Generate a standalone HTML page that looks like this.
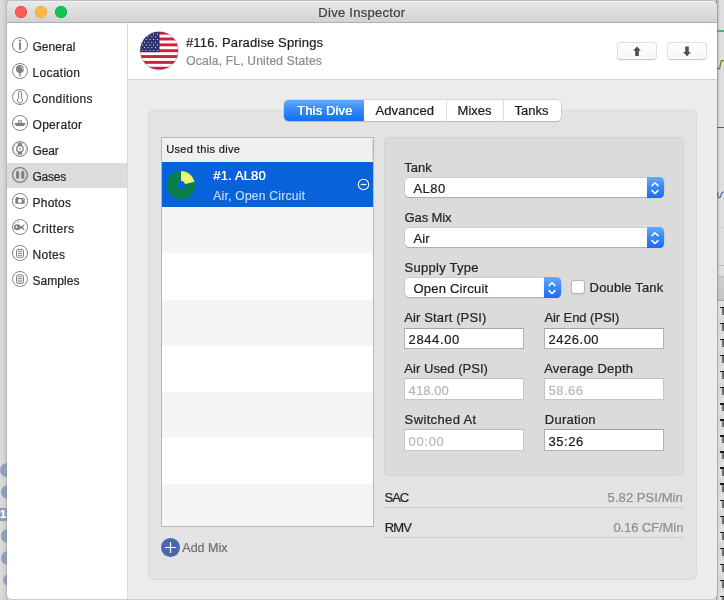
<!DOCTYPE html>
<html><head><meta charset="utf-8"><title>Dive Inspector</title>
<style>
html,body{margin:0;padding:0;}
body{width:724px;height:600px;overflow:hidden;position:relative;background:#d9d9d9;font-family:"Liberation Sans",sans-serif;}
.a{position:absolute;}
.t{position:absolute;white-space:nowrap;line-height:1;-webkit-text-stroke:0.22px currentColor;font-family:"Liberation Sans",sans-serif;}
svg{position:absolute;overflow:visible;}
</style></head><body>
<div class="a" style="left:0;top:0;width:724px;height:600px;will-change:transform;">

<div class="a" style="left:0;top:0;width:8px;height:600px;background:linear-gradient(90deg,#dcdcdc 0,#d3d3d3 4px,#c3c3c3 7px);"></div>
<div class="a" style="left:0px;top:463px;width:14px;height:14px;border-radius:7px;background:#8e9fbc;"></div>
<div class="a" style="left:1px;top:485px;width:14px;height:14px;border-radius:7px;background:#8e9fbc;"></div>
<div class="a" style="left:0.5px;top:529px;width:14px;height:14px;border-radius:7px;background:#8e9fbc;"></div>
<div class="a" style="left:0.5px;top:550.5px;width:14px;height:14px;border-radius:7px;background:#8e9fbc;"></div>
<div class="a" style="left:2.5px;top:573.5px;width:12px;height:12px;border-radius:6px;background:#8e9fbc;"></div>
<div class="a" style="left:0;top:508px;width:8px;height:13px;background:#8d9dba;"></div>
<div class="t" style="left:0px;top:508.5px;font-size:11px;font-weight:bold;color:#fff;">1:</div>
<div class="a" style="left:716px;top:0;width:8px;height:600px;background:#dedede;"></div>
<div class="a" style="left:716px;top:0;width:4px;height:600px;background:linear-gradient(90deg,#bdbdbd,#dedede);"></div>
<div class="a" style="left:716px;top:30px;width:8px;height:1.5px;background:#4fae78;"></div>
<div class="a" style="left:716px;top:126.5px;width:8px;height:1.5px;background:#8a3a96;"></div>
<svg style="left:716px;top:55px" width="8" height="20"><path d="M0 13.6 L3.6 13.6 L5.2 5.6 L8 5.6" fill="none" stroke="#6f7a22" stroke-width="1.2"/></svg>
<svg style="left:716px;top:188px" width="8" height="14"><path d="M1.5 4 C1.5 11 4.5 11 5 7 C5.3 4.5 6.5 4 8 4" fill="none" stroke="#4a5fa8" stroke-width="1.2"/></svg>
<div class="a" style="left:716px;top:227px;width:8px;height:1px;background:#cfcfcf;"></div>
<div class="a" style="left:716px;top:265px;width:8px;height:1px;background:#bdbdbd;"></div>
<div class="a" style="left:716px;top:276px;width:8px;height:25px;background:linear-gradient(#b4b4b4 0,#cdcdcd 2px,#c4c4c4 100%);border-bottom:1px solid #a8a8a8;box-sizing:border-box;"></div>
<div class="a" style="left:716px;top:301.40px;width:8px;height:16.07px;background:#e0e0e0;"></div>
<div class="a" style="left:722px;top:306.80px;width:2px;height:8px;background:#6a6a6a;"></div>
<div class="a" style="left:719.8px;top:306.70px;width:5px;height:1.4px;background:#1c1c1c;"></div>
<div class="a" style="left:716px;top:317.47px;width:8px;height:16.07px;background:#d9d9d9;"></div>
<div class="a" style="left:722px;top:322.87px;width:2px;height:8px;background:#6a6a6a;"></div>
<div class="a" style="left:719.8px;top:322.77px;width:5px;height:1.4px;background:#1c1c1c;"></div>
<div class="a" style="left:716px;top:333.54px;width:8px;height:16.07px;background:#e0e0e0;"></div>
<div class="a" style="left:722px;top:338.94px;width:2px;height:8px;background:#6a6a6a;"></div>
<div class="a" style="left:719.8px;top:338.84px;width:5px;height:1.4px;background:#1c1c1c;"></div>
<div class="a" style="left:716px;top:349.61px;width:8px;height:16.07px;background:#d9d9d9;"></div>
<div class="a" style="left:722px;top:355.01px;width:2px;height:8px;background:#6a6a6a;"></div>
<div class="a" style="left:719.8px;top:354.91px;width:5px;height:1.4px;background:#1c1c1c;"></div>
<div class="a" style="left:716px;top:365.68px;width:8px;height:16.07px;background:#e0e0e0;"></div>
<div class="a" style="left:722px;top:371.08px;width:2px;height:8px;background:#6a6a6a;"></div>
<div class="a" style="left:719.8px;top:370.98px;width:5px;height:1.4px;background:#1c1c1c;"></div>
<div class="a" style="left:716px;top:381.75px;width:8px;height:16.07px;background:#d9d9d9;"></div>
<div class="a" style="left:722px;top:387.15px;width:2px;height:8px;background:#6a6a6a;"></div>
<div class="a" style="left:719.8px;top:387.05px;width:5px;height:1.4px;background:#1c1c1c;"></div>
<div class="a" style="left:716px;top:397.82px;width:8px;height:16.07px;background:#e0e0e0;"></div>
<div class="a" style="left:722px;top:403.22px;width:2px;height:8px;background:#6a6a6a;"></div>
<div class="a" style="left:719.8px;top:403.12px;width:5px;height:1.4px;background:#1c1c1c;"></div>
<div class="a" style="left:716px;top:413.89px;width:8px;height:16.07px;background:#d9d9d9;"></div>
<div class="a" style="left:722px;top:419.29px;width:2px;height:8px;background:#6a6a6a;"></div>
<div class="a" style="left:719.8px;top:419.19px;width:5px;height:1.4px;background:#1c1c1c;"></div>
<div class="a" style="left:716px;top:429.96px;width:8px;height:16.07px;background:#e0e0e0;"></div>
<div class="a" style="left:722px;top:435.36px;width:2px;height:8px;background:#6a6a6a;"></div>
<div class="a" style="left:719.8px;top:435.26px;width:5px;height:1.4px;background:#1c1c1c;"></div>
<div class="a" style="left:716px;top:446.03px;width:8px;height:16.07px;background:#d9d9d9;"></div>
<div class="a" style="left:722px;top:451.43px;width:2px;height:8px;background:#6a6a6a;"></div>
<div class="a" style="left:719.8px;top:451.33px;width:5px;height:1.4px;background:#1c1c1c;"></div>
<div class="a" style="left:716px;top:462.10px;width:8px;height:16.07px;background:#e0e0e0;"></div>
<div class="a" style="left:722px;top:467.50px;width:2px;height:8px;background:#6a6a6a;"></div>
<div class="a" style="left:719.8px;top:467.40px;width:5px;height:1.4px;background:#1c1c1c;"></div>
<div class="a" style="left:716px;top:478.17px;width:8px;height:16.07px;background:#d9d9d9;"></div>
<div class="a" style="left:722px;top:483.57px;width:2px;height:8px;background:#6a6a6a;"></div>
<div class="a" style="left:719.8px;top:483.47px;width:5px;height:1.4px;background:#1c1c1c;"></div>
<div class="a" style="left:716px;top:494.24px;width:8px;height:16.07px;background:#e0e0e0;"></div>
<div class="a" style="left:722px;top:499.64px;width:2px;height:8px;background:#6a6a6a;"></div>
<div class="a" style="left:719.8px;top:499.54px;width:5px;height:1.4px;background:#1c1c1c;"></div>
<div class="a" style="left:716px;top:510.31px;width:8px;height:16.07px;background:#d9d9d9;"></div>
<div class="a" style="left:722px;top:515.71px;width:2px;height:8px;background:#6a6a6a;"></div>
<div class="a" style="left:719.8px;top:515.61px;width:5px;height:1.4px;background:#1c1c1c;"></div>
<div class="a" style="left:716px;top:526.38px;width:8px;height:16.07px;background:#e0e0e0;"></div>
<div class="a" style="left:722px;top:531.78px;width:2px;height:8px;background:#6a6a6a;"></div>
<div class="a" style="left:719.8px;top:531.68px;width:5px;height:1.4px;background:#1c1c1c;"></div>
<div class="a" style="left:716px;top:542.45px;width:8px;height:16.07px;background:#d9d9d9;"></div>
<div class="a" style="left:722px;top:547.85px;width:2px;height:8px;background:#6a6a6a;"></div>
<div class="a" style="left:719.8px;top:547.75px;width:5px;height:1.4px;background:#1c1c1c;"></div>
<div class="a" style="left:716px;top:558.52px;width:8px;height:16.07px;background:#e0e0e0;"></div>
<div class="a" style="left:722px;top:563.92px;width:2px;height:8px;background:#6a6a6a;"></div>
<div class="a" style="left:719.8px;top:563.82px;width:5px;height:1.4px;background:#1c1c1c;"></div>
<div class="a" style="left:716px;top:574.59px;width:8px;height:16.07px;background:#d9d9d9;"></div>
<div class="a" style="left:722px;top:579.99px;width:2px;height:8px;background:#6a6a6a;"></div>
<div class="a" style="left:719.8px;top:579.89px;width:5px;height:1.4px;background:#1c1c1c;"></div>
<div class="a" style="left:716px;top:590.66px;width:8px;height:16.07px;background:#e0e0e0;"></div>
<div class="a" style="left:722px;top:596.06px;width:2px;height:8px;background:#6a6a6a;"></div>
<div class="a" style="left:719.8px;top:595.96px;width:5px;height:1.4px;background:#1c1c1c;"></div>
<div class="a" style="left:716px;top:0;width:3.2px;height:600px;background:linear-gradient(90deg,rgba(110,110,110,.6),rgba(140,140,140,0));"></div>
<div class="a" style="left:8px;top:0;width:708px;height:1.2px;background:#c6c9d0;"></div>
<div class="a" id="win" style="left:7px;top:1px;width:710px;height:598.4px;border-radius:5px 5px 5px 5px;background:#ececec;overflow:hidden;box-shadow:0 0 0 0.5px rgba(0,0,0,.12);">
<div class="a" style="left:-7px;top:-1px;width:724px;height:600px;">
<div class="a" style="left:7px;top:1px;width:710px;height:21px;background:linear-gradient(#e9e9e9,#d2d2d2);border-bottom:1px solid #b0b0b0;box-shadow:inset 0 1px 0 #f2f2f2;"></div>
<div class="a" style="left:15px;top:5.9px;width:12px;height:12px;border-radius:6px;background:#fc5b57;box-shadow:inset 0 0 0 0.5px #df4744;"></div>
<div class="a" style="left:35px;top:5.9px;width:12px;height:12px;border-radius:6px;background:#fdbc40;box-shadow:inset 0 0 0 0.5px #de9f34;"></div>
<div class="a" style="left:55px;top:5.9px;width:12px;height:12px;border-radius:6px;background:#14c552;box-shadow:inset 0 0 0 0.5px #10a844;"></div>
<div class="t" style="left:318.30px;top:6px;font-size:13px;color:#404040;letter-spacing:0.285px;">Dive Inspector</div>
<div class="a" style="left:7px;top:23px;width:120px;height:580px;background:#fff;border-right:1px solid #dadada;"></div>
<div class="a" style="left:7px;top:163px;width:120px;height:24.7px;background:#dcdcdc;"></div>
<div class="a" style="left:128px;top:23px;width:590px;height:56px;background:#fff;border-bottom:1px solid #d2d2d2;"></div>
<div class="t" style="left:32.50px;top:41px;font-size:12px;color:#262626;letter-spacing:0.034px;">General</div>
<div class="a" style="left:11.95px;top:36.90px;width:15.8px;height:15.8px;border-radius:50%;box-sizing:border-box;border:1.3px solid #828282;"></div>
<div class="t" style="left:32.50px;top:67px;font-size:12px;color:#262626;letter-spacing:0.304px;">Location</div>
<div class="a" style="left:11.95px;top:62.90px;width:15.8px;height:15.8px;border-radius:50%;box-sizing:border-box;border:1.3px solid #828282;"></div>
<div class="t" style="left:32.50px;top:93px;font-size:12px;color:#262626;letter-spacing:0.367px;">Conditions</div>
<div class="a" style="left:11.95px;top:88.90px;width:15.8px;height:15.8px;border-radius:50%;box-sizing:border-box;border:1.3px solid #828282;"></div>
<div class="t" style="left:32.50px;top:119px;font-size:12px;color:#262626;letter-spacing:0.307px;">Operator</div>
<div class="a" style="left:11.95px;top:114.90px;width:15.8px;height:15.8px;border-radius:50%;box-sizing:border-box;border:1.3px solid #828282;"></div>
<div class="t" style="left:32.50px;top:145px;font-size:12px;color:#262626;letter-spacing:-0.159px;">Gear</div>
<div class="a" style="left:11.95px;top:140.90px;width:15.8px;height:15.8px;border-radius:50%;box-sizing:border-box;border:1.3px solid #828282;"></div>
<div class="t" style="left:32.50px;top:171px;font-size:12px;color:#262626;letter-spacing:-0.220px;">Gases</div>
<div class="a" style="left:11.95px;top:166.90px;width:15.8px;height:15.8px;border-radius:50%;box-sizing:border-box;border:1.3px solid #828282;"></div>
<div class="t" style="left:32.50px;top:197px;font-size:12px;color:#262626;letter-spacing:0.229px;">Photos</div>
<div class="a" style="left:11.95px;top:192.90px;width:15.8px;height:15.8px;border-radius:50%;box-sizing:border-box;border:1.3px solid #828282;"></div>
<div class="t" style="left:32.50px;top:223px;font-size:12px;color:#262626;letter-spacing:0.405px;">Critters</div>
<div class="a" style="left:11.95px;top:218.90px;width:15.8px;height:15.8px;border-radius:50%;box-sizing:border-box;border:1.3px solid #828282;"></div>
<div class="t" style="left:32.50px;top:249px;font-size:12px;color:#262626;letter-spacing:0.289px;">Notes</div>
<div class="a" style="left:11.95px;top:244.90px;width:15.8px;height:15.8px;border-radius:50%;box-sizing:border-box;border:1.3px solid #828282;"></div>
<div class="t" style="left:32.50px;top:275px;font-size:12px;color:#262626;letter-spacing:0.051px;">Samples</div>
<div class="a" style="left:11.95px;top:270.90px;width:15.8px;height:15.8px;border-radius:50%;box-sizing:border-box;border:1.3px solid #828282;"></div>
<svg style="left:0;top:0" width="40" height="300" viewBox="0 0 40 300">
<g fill="#808080" stroke="none">
<!-- General: i -->
<circle cx="19.95" cy="40.6" r="1.15"/>
<rect x="18.95" y="42.5" width="2.0" height="7.2" rx="0.3"/>
<!-- Location: pin -->
<circle cx="19.9" cy="69.0" r="3.9"/>
<path d="M19.0 72 L20.8 72 L20.4 76.8 L19.4 76.8 Z"/>
<path d="M20.6 66.4 A2.5 2.5 0 0 1 22.6 69.2" fill="none" stroke="#fff" stroke-width="0.8"/>
<!-- Conditions: thermometer -->
<path d="M18.5 92.6 A1.4 1.4 0 0 1 21.3 92.6 L21.3 98.2 A2.6 2.6 0 1 1 18.5 98.2 Z" fill="none" stroke="#808080" stroke-width="1"/>
<path d="M21.3 94.4 H22.6 M21.3 96.3 H22.6" stroke="#808080" stroke-width="0.8"/>
<!-- Operator: boat -->
<path d="M14.2 122.9 L25.8 122.9 L23.8 126 L16.2 126 Z"/>
<path d="M18.2 120.2 H21.9 V122.9 H18.2 Z M19.2 121 V122.4 H20.9 V121 Z" fill-rule="evenodd"/>
<!-- Gear: watch -->
<path d="M18.0 143.1 H21.8 L22.3 146.2 H17.5 Z M18.0 154.6 H21.8 L22.3 151.5 H17.5 Z"/>
<circle cx="19.9" cy="148.85" r="3.25" fill="#fff" stroke="#808080" stroke-width="1.3"/>
<circle cx="19.9" cy="148.85" r="0.9"/>
<circle cx="19.85" cy="148.8" r="6.4" fill="none" stroke="#9a9a9a" stroke-width="0.6"/>
<circle cx="19.85" cy="174.8" r="7.25" fill="none" stroke="#7a7a7a" stroke-width="1.3" stroke-opacity="0.6"/>
<!-- Gases: tanks -->
<path d="M16 172.6 Q16 171.4 17 171.2 L17 170.4 H18.1 L18.1 171.2 Q19.1 171.4 19.1 172.6 L19.1 177.8 Q19.1 178.8 17.55 178.8 Q16 178.8 16 177.8 Z"/>
<path d="M21.2 172.6 Q21.2 171.4 22.2 171.2 L22.2 170.4 H23.3 L23.3 171.2 Q24.3 171.4 24.3 172.6 L24.3 177.8 Q24.3 178.8 22.75 178.8 Q21.2 178.8 21.2 177.8 Z"/>
<!-- Photos: camera -->
<path d="M15.3 198.7 Q15.3 198.0 16 198.0 L16.2 197.1 H18.6 L18.8 198.0 H24 Q24.7 198.0 24.7 198.7 V203.0 Q24.7 203.7 24 203.7 H16 Q15.3 203.7 15.3 203.0 Z"/>
<circle cx="19.9" cy="200.9" r="2.0" fill="#fff"/>
<circle cx="23.4" cy="199.3" r="0.55" fill="#fff"/>
<!-- Critters: fish -->
<ellipse cx="17.3" cy="227.3" rx="3.5" ry="3.0"/>
<path d="M19.6 227.3 L24.8 224.0 L23.0 227.3 L24.8 230.6 Z"/>
<circle cx="16.5" cy="227.0" r="0.95" fill="#fff"/>
<circle cx="18" cy="221.7" r="0.8" fill="#9a9a9a"/>
<circle cx="15.6" cy="223.4" r="0.45" fill="#8a8a8a"/>
<!-- Notes -->
<rect x="16.5" y="249.7" width="7.0" height="7.6" rx="1.0" fill="none" stroke="#808080" stroke-width="1.0"/>
<path d="M18.4 248.4 V250 M21.5 248.4 V250" stroke="#808080" stroke-width="0.9"/>
<path d="M18 251.6 H22 M18 253.5 H22 M18 255.4 H22" stroke="#808080" stroke-width="0.9"/>
<!-- Samples -->
<rect x="16.5" y="274.8" width="7.0" height="8.8" rx="1.8" fill="none" stroke="#808080" stroke-width="1.0"/>
<path d="M17.6 276.7 H22.4 M17.6 278.45 H22.4 M17.6 280.2 H22.4 M17.6 281.9 H22.4" stroke="#808080" stroke-width="0.85"/>
</g></svg>

<svg style="left:0;top:0" width="200" height="80" viewBox="0 0 200 80"><defs><clipPath id="fc"><circle cx="159.2" cy="50.7" r="19.0"/></clipPath></defs><g clip-path="url(#fc)">
<rect x="140.2" y="31.700000000000003" width="38.0" height="38.0" fill="#ffffff"/>
<rect x="140.2" y="31.70" width="38.0" height="2.92" fill="#cf2238"/>
<rect x="140.2" y="37.55" width="38.0" height="2.92" fill="#cf2238"/>
<rect x="140.2" y="43.39" width="38.0" height="2.92" fill="#cf2238"/>
<rect x="140.2" y="49.24" width="38.0" height="2.92" fill="#cf2238"/>
<rect x="140.2" y="55.08" width="38.0" height="2.92" fill="#cf2238"/>
<rect x="140.2" y="60.93" width="38.0" height="2.92" fill="#cf2238"/>
<rect x="140.2" y="66.78" width="38.0" height="2.92" fill="#cf2238"/>
<rect x="140.2" y="31.700000000000003" width="19.3" height="20.46" fill="#2d3270"/>
<circle cx="142.60" cy="34.12" r="0.55" fill="#fff"/>
<circle cx="146.30" cy="34.12" r="0.55" fill="#fff"/>
<circle cx="150.00" cy="34.12" r="0.55" fill="#fff"/>
<circle cx="153.70" cy="34.12" r="0.55" fill="#fff"/>
<circle cx="157.40" cy="34.12" r="0.55" fill="#fff"/>
<circle cx="144.45" cy="36.82" r="0.55" fill="#fff"/>
<circle cx="148.15" cy="36.82" r="0.55" fill="#fff"/>
<circle cx="151.85" cy="36.82" r="0.55" fill="#fff"/>
<circle cx="155.55" cy="36.82" r="0.55" fill="#fff"/>
<circle cx="142.60" cy="39.51" r="0.55" fill="#fff"/>
<circle cx="146.30" cy="39.51" r="0.55" fill="#fff"/>
<circle cx="150.00" cy="39.51" r="0.55" fill="#fff"/>
<circle cx="153.70" cy="39.51" r="0.55" fill="#fff"/>
<circle cx="157.40" cy="39.51" r="0.55" fill="#fff"/>
<circle cx="144.45" cy="42.20" r="0.55" fill="#fff"/>
<circle cx="148.15" cy="42.20" r="0.55" fill="#fff"/>
<circle cx="151.85" cy="42.20" r="0.55" fill="#fff"/>
<circle cx="155.55" cy="42.20" r="0.55" fill="#fff"/>
<circle cx="142.60" cy="44.89" r="0.55" fill="#fff"/>
<circle cx="146.30" cy="44.89" r="0.55" fill="#fff"/>
<circle cx="150.00" cy="44.89" r="0.55" fill="#fff"/>
<circle cx="153.70" cy="44.89" r="0.55" fill="#fff"/>
<circle cx="157.40" cy="44.89" r="0.55" fill="#fff"/>
<circle cx="144.45" cy="47.58" r="0.55" fill="#fff"/>
<circle cx="148.15" cy="47.58" r="0.55" fill="#fff"/>
<circle cx="151.85" cy="47.58" r="0.55" fill="#fff"/>
<circle cx="155.55" cy="47.58" r="0.55" fill="#fff"/>
<circle cx="142.60" cy="50.28" r="0.55" fill="#fff"/>
<circle cx="146.30" cy="50.28" r="0.55" fill="#fff"/>
<circle cx="150.00" cy="50.28" r="0.55" fill="#fff"/>
<circle cx="153.70" cy="50.28" r="0.55" fill="#fff"/>
<circle cx="157.40" cy="50.28" r="0.55" fill="#fff"/>
</g>
<circle cx="159.2" cy="50.7" r="19.0" fill="none" stroke="#5b2a35" stroke-opacity=".55" stroke-width="0.6"/></svg>
<div class="t" style="left:186.00px;top:36px;font-size:13px;color:#1e1e1e;letter-spacing:0.135px;">#116. Paradise Springs</div>
<div class="t" style="left:186.30px;top:55px;font-size:12px;color:#8c8c8c;letter-spacing:0.207px;">Ocala, FL, United States</div>
<div class="a" style="left:617.3px;top:42px;width:39.4px;height:17.5px;box-sizing:border-box;border-radius:4px;background:linear-gradient(#ffffff,#f7f7f7);border:1px solid #dfdfdf;border-bottom-color:#cbcbcb;box-shadow:0 0.5px 0.5px rgba(0,0,0,.08);"></div>
<svg style="left:631.8px;top:46px" width="10" height="11"><path d="M5 0.5 L8.9 4.8 L6.8 4.8 L6.8 10 L3.2 10 L3.2 4.8 L1.1 4.8 Z" fill="#505050"/></svg>
<div class="a" style="left:667.4px;top:42px;width:39.4px;height:17.5px;box-sizing:border-box;border-radius:4px;background:linear-gradient(#ffffff,#f7f7f7);border:1px solid #dfdfdf;border-bottom-color:#cbcbcb;box-shadow:0 0.5px 0.5px rgba(0,0,0,.08);"></div>
<svg style="left:681.9px;top:46px" width="10" height="11"><path d="M5 10.2 L8.9 5.9 L6.8 5.9 L6.8 0.6 L3.2 0.6 L3.2 5.9 L1.1 5.9 Z" fill="#505050"/></svg>
<div class="a" style="left:148.3px;top:110px;width:548.6px;height:469.5px;box-sizing:border-box;border-radius:5px;background:#e3e3e3;border:1px solid #dadada;"></div>
<div class="a" style="left:284px;top:100px;width:277px;height:20.5px;box-sizing:border-box;border-radius:4.5px;background:#fff;box-shadow:0 0 0 0.5px #c4c4c4,0 1px 1px rgba(0,0,0,.22);overflow:hidden;"><div class="a" style="left:0;top:0;width:80px;height:21px;background:linear-gradient(#62a9f9,#3487f6 50%,#126ff5);"></div><div class="a" style="left:162px;top:0;width:1px;height:21px;background:#dcdcdc;"></div><div class="a" style="left:219px;top:0;width:1px;height:21px;background:#dcdcdc;"></div></div>
<div class="t" style="left:297.20px;top:104px;font-size:13px;color:#ffffff;letter-spacing:0.127px;text-shadow:0 0 0.4px #fff;">This Dive</div>
<div class="t" style="left:375.50px;top:104px;font-size:13px;color:#1c1c1c;letter-spacing:0.097px;">Advanced</div>
<div class="t" style="left:457.60px;top:104px;font-size:13px;color:#1c1c1c;letter-spacing:-0.011px;">Mixes</div>
<div class="t" style="left:514.60px;top:104px;font-size:13px;color:#1c1c1c;letter-spacing:-0.039px;">Tanks</div>
<div class="a" style="left:161px;top:137px;width:213px;height:390px;box-sizing:border-box;background:#fff;border:1px solid #b9b9b9;"></div>
<div class="a" style="left:162px;top:138px;width:211px;height:23.5px;background:#f0f0f0;border-bottom:0.5px solid #d0d0d0;"></div>
<div class="a" style="left:371.5px;top:140px;width:1px;height:19px;background:#d4d4d4;"></div>
<div class="t" style="left:166.20px;top:144px;font-size:11px;color:#1c1c1c;letter-spacing:0.362px;">Used this dive</div>
<div class="a" style="left:162px;top:161.8px;width:211px;height:44.8px;background:#0862da;"></div>
<div class="a" style="left:162px;top:207px;width:211px;height:46.4px;background:#f4f5f5;"></div>
<div class="a" style="left:162px;top:299.8px;width:211px;height:46.0px;background:#f4f5f5;"></div>
<div class="a" style="left:162px;top:392px;width:211px;height:46.2px;background:#f4f5f5;"></div>
<div class="a" style="left:162px;top:484.2px;width:211px;height:41.8px;background:#f4f5f5;"></div>
<svg style="left:166px;top:170px" width="30" height="30" viewBox="-15 -15 30 30"><circle cx="0" cy="0" r="14" fill="#0a8049"/><path d="M0 0 L0 -14 A14 14 0 0 1 13.6 -3.3 Z" fill="#eef571"/><circle cx="0" cy="0" r="4" fill="#0862da"/></svg>
<div class="t" style="left:213.30px;top:169px;font-size:13px;color:#ffffff;letter-spacing:0.154px;text-shadow:0 0 0.4px #fff;">#1. AL80</div>
<div class="t" style="left:213.30px;top:190px;font-size:12px;color:#c3d8f6;letter-spacing:0.271px;">Air, Open Circuit</div>
<svg style="left:357px;top:178.2px" width="13" height="13" viewBox="-6.5 -6.5 13 13"><circle cx="0" cy="0" r="5.2" fill="none" stroke="#fff" stroke-width="1.1"/><path d="M-2.8 0 H2.8" stroke="#fff" stroke-width="1.2"/></svg>
<div class="a" style="left:161px;top:537.8px;width:19px;height:19px;border-radius:50%;background:#4a69a9;"></div>
<svg style="left:161px;top:537.8px" width="19" height="19"><path d="M9.5 4 V15 M4 9.5 H15" stroke="#fff" stroke-width="1.2" fill="none"/></svg>
<div class="t" style="left:182.30px;top:542px;font-size:12.5px;color:#6f6f6f;letter-spacing:0.008px;">Add Mix</div>
<div class="a" style="left:384.3px;top:137.2px;width:299.6px;height:339.2px;box-sizing:border-box;border-radius:4.5px;background:#dbdbdb;border:1px solid #d3d3d3;"></div>
<div class="t" style="left:404.30px;top:161px;font-size:13px;color:#262626;letter-spacing:-0.027px;">Tank</div>
<div class="t" style="left:404.60px;top:211px;font-size:13px;color:#262626;letter-spacing:-0.112px;">Gas Mix</div>
<div class="t" style="left:404.60px;top:261px;font-size:13px;color:#262626;letter-spacing:0.269px;">Supply Type</div>
<div class="t" style="left:404.30px;top:311px;font-size:13px;color:#262626;letter-spacing:0.130px;">Air Start (PSI)</div>
<div class="t" style="left:544.40px;top:311px;font-size:13px;color:#262626;letter-spacing:-0.071px;">Air End (PSI)</div>
<div class="t" style="left:404.30px;top:362px;font-size:13px;color:#262626;letter-spacing:0.041px;">Air Used (PSI)</div>
<div class="t" style="left:544.20px;top:362px;font-size:13px;color:#262626;letter-spacing:0.193px;">Average Depth</div>
<div class="t" style="left:404.60px;top:413px;font-size:13px;color:#262626;letter-spacing:0.367px;">Switched At</div>
<div class="t" style="left:544.80px;top:413px;font-size:13px;color:#262626;letter-spacing:0.237px;">Duration</div>
<div class="a" style="left:404.5px;top:177.5px;width:259.5px;height:19.5px;box-sizing:border-box;border-radius:4.5px;background:#fff;box-shadow:0 0 0 0.5px #c2c2c2,0 1px 1px rgba(0,0,0,.30);"></div>
<div class="a" style="left:647.0px;top:177.0px;width:17px;height:21px;border-radius:0 4.5px 4.5px 0;background:linear-gradient(#63aaf9,#3a8bf6 45%,#1a6cf3);"></div>
<svg style="left:650.4px;top:177.5px" width="10" height="20"><path d="M2 7.6 L5 4.7 L8 7.6 M2 12.6 L5 15.5 L8 12.6" fill="none" stroke="#fff" stroke-width="1.5" stroke-linecap="round" stroke-linejoin="round"/></svg>
<div class="t" style="left:413.40px;top:182px;font-size:13px;color:#1c1c1c;letter-spacing:0.482px;">AL80</div>
<div class="a" style="left:404.5px;top:227.6px;width:259.5px;height:19.5px;box-sizing:border-box;border-radius:4.5px;background:#fff;box-shadow:0 0 0 0.5px #c2c2c2,0 1px 1px rgba(0,0,0,.30);"></div>
<div class="a" style="left:647.0px;top:227.1px;width:17px;height:21px;border-radius:0 4.5px 4.5px 0;background:linear-gradient(#63aaf9,#3a8bf6 45%,#1a6cf3);"></div>
<svg style="left:650.4px;top:227.6px" width="10" height="20"><path d="M2 7.6 L5 4.7 L8 7.6 M2 12.6 L5 15.5 L8 12.6" fill="none" stroke="#fff" stroke-width="1.5" stroke-linecap="round" stroke-linejoin="round"/></svg>
<div class="t" style="left:413.40px;top:232px;font-size:13px;color:#1c1c1c;letter-spacing:0.157px;">Air</div>
<div class="a" style="left:404.5px;top:277.5px;width:156.5px;height:19.5px;box-sizing:border-box;border-radius:4.5px;background:#fff;box-shadow:0 0 0 0.5px #c2c2c2,0 1px 1px rgba(0,0,0,.30);"></div>
<div class="a" style="left:544.0px;top:277.0px;width:17px;height:21px;border-radius:0 4.5px 4.5px 0;background:linear-gradient(#63aaf9,#3a8bf6 45%,#1a6cf3);"></div>
<svg style="left:547.4px;top:277.5px" width="10" height="20"><path d="M2 7.6 L5 4.7 L8 7.6 M2 12.6 L5 15.5 L8 12.6" fill="none" stroke="#fff" stroke-width="1.5" stroke-linecap="round" stroke-linejoin="round"/></svg>
<div class="t" style="left:413.40px;top:282px;font-size:13px;color:#1c1c1c;letter-spacing:0.231px;">Open Circuit</div>
<div class="a" style="left:571.3px;top:280.3px;width:14px;height:14px;box-sizing:border-box;border-radius:3px;background:#fff;border:1px solid #b4b4b4;box-shadow:0 0.5px 0.5px rgba(0,0,0,.12);"></div>
<div class="t" style="left:589.60px;top:281px;font-size:13px;color:#262626;letter-spacing:0.154px;">Double Tank</div>
<div class="a" style="left:404.1px;top:327.5px;width:119.6px;height:21.6px;box-sizing:border-box;background:#fff;border:1px solid #b2b2b2;border-top-color:#a3a3a3;"></div>
<div class="t" style="left:408.60px;top:333px;font-size:13px;color:#1c1c1c;letter-spacing:0.601px;">2844.00</div>
<div class="a" style="left:544.1px;top:327.5px;width:119.6px;height:21.6px;box-sizing:border-box;background:#fff;border:1px solid #b2b2b2;border-top-color:#a3a3a3;"></div>
<div class="t" style="left:548.60px;top:333px;font-size:13px;color:#1c1c1c;letter-spacing:0.501px;">2426.00</div>
<div class="a" style="left:404.1px;top:378.2px;width:119.6px;height:21.6px;box-sizing:border-box;background:#fff;border:1px solid #c6c6c6;border-top-color:#bdbdbd;"></div>
<div class="t" style="left:408.60px;top:384px;font-size:13px;color:#b8b8b8;letter-spacing:0.087px;">418.00</div>
<div class="a" style="left:544.1px;top:378.2px;width:119.6px;height:21.6px;box-sizing:border-box;background:#fff;border:1px solid #c6c6c6;border-top-color:#bdbdbd;"></div>
<div class="t" style="left:548.60px;top:384px;font-size:13px;color:#b8b8b8;letter-spacing:0.468px;">58.66</div>
<div class="a" style="left:404.1px;top:429.2px;width:119.6px;height:21.6px;box-sizing:border-box;background:#fff;border:1px solid #c6c6c6;border-top-color:#bdbdbd;"></div>
<div class="t" style="left:408.60px;top:435px;font-size:13px;color:#b8b8b8;letter-spacing:0.668px;">00:00</div>
<div class="a" style="left:544.1px;top:429.2px;width:119.6px;height:21.6px;box-sizing:border-box;background:#fff;border:1px solid #b2b2b2;border-top-color:#a3a3a3;"></div>
<div class="t" style="left:548.60px;top:435px;font-size:13px;color:#1c1c1c;letter-spacing:0.518px;">35:26</div>
<div class="t" style="left:384.60px;top:491px;font-size:13px;color:#262626;letter-spacing:-1.064px;">SAC</div>
<div class="t" style="left:384.80px;top:521px;font-size:13px;color:#262626;letter-spacing:-0.943px;">RMV</div>
<div class="t" style="left:607.60px;top:491px;font-size:13px;color:#8e8e8e;letter-spacing:0.070px;">5.82 PSI/Min</div>
<div class="t" style="left:613.40px;top:521px;font-size:13px;color:#8e8e8e;letter-spacing:-0.080px;">0.16 CF/Min</div>
<div class="a" style="left:384.3px;top:507px;width:299.6px;height:1px;background:#cdcdcd;"></div>
<div class="a" style="left:384.3px;top:536.8px;width:299.6px;height:1px;background:#cdcdcd;"></div>
</div></div>
</div></body></html>
